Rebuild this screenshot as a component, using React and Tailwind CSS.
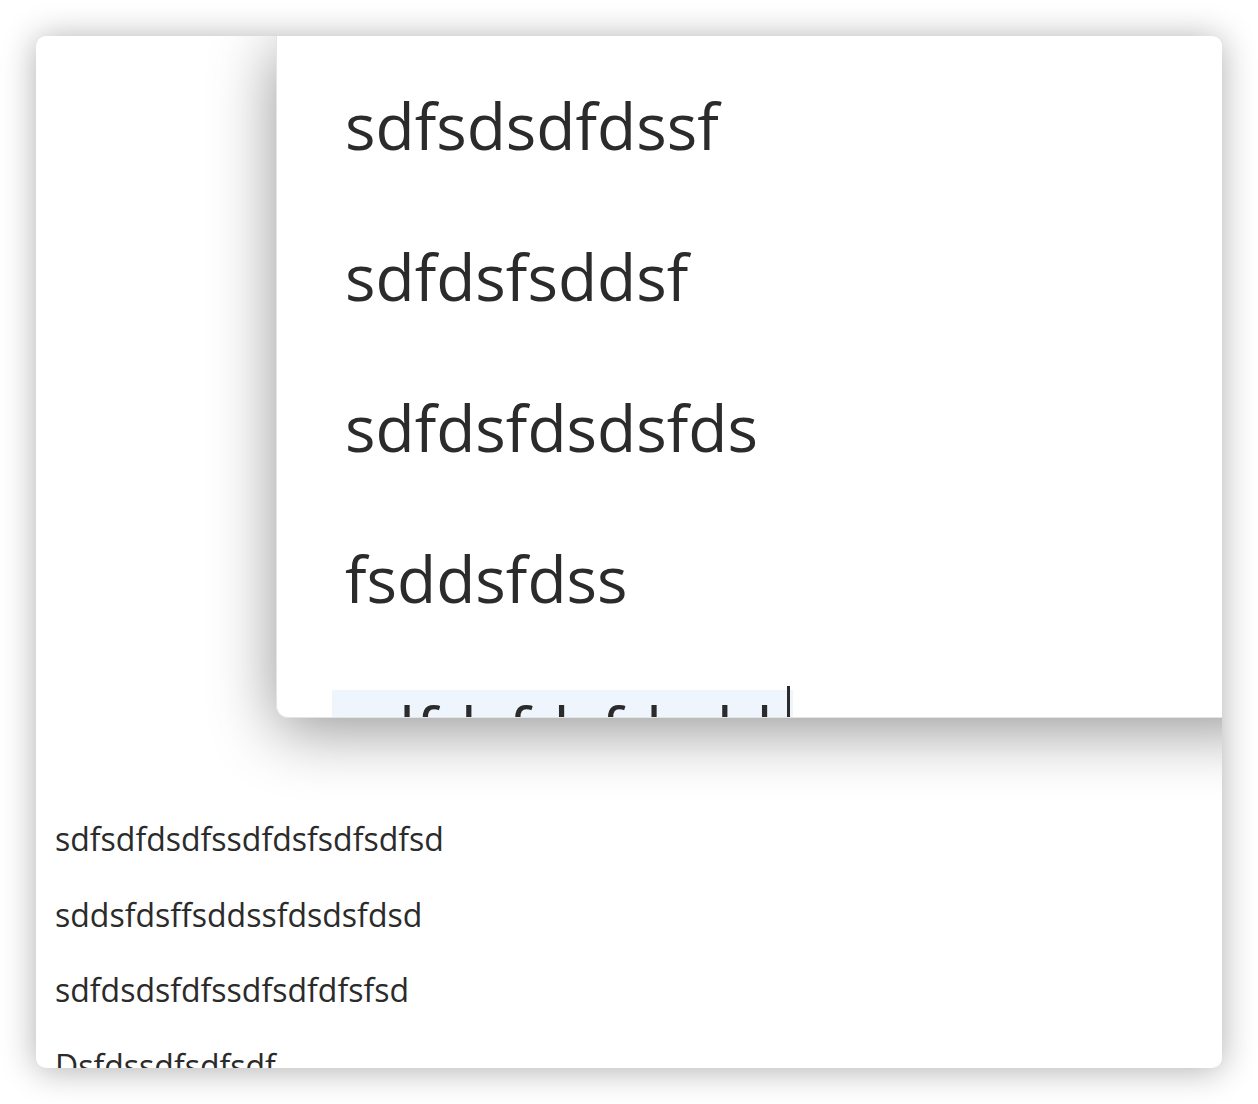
const BIG_ITEMS = ["sdfsdsdfdssf", "sdfdsfsddsf", "sdfdsfdsdsfds", "fsddsfdss"];
const HOVER_ITEM = "sdfdsfdsfdsdd";

const LIST_ITEMS = [
    "sdfsdfdsdfssdfdsfsdfsdfsd",
    "sddsfdsffsddssfdsdsfdsd",
    "sdfdsdsfdfssdfsdfdfsfsd",
    "Dsfdssdfsdfsdf",
];

export default function App() {
    return (
        <div className="min-h-screen bg-white p-[36px] font-['Open_Sans','Noto_Sans',sans-serif] text-[#2b2b2b]">
            <div className="w-[1186px] h-[1032px] rounded-[10px] overflow-hidden bg-white shadow-[0_2px_34px_rgba(0,0,0,0.32)]">
                {/* magnified dropdown */}
                <div className="relative ml-[240px] w-[1000px] h-[682px] overflow-hidden rounded-bl-[12px] bg-white border-l border-b border-[#e4e4e4] shadow-[0_12px_64px_rgba(0,0,0,0.42)] pt-[14px] pl-[68px]">
                    {BIG_ITEMS.map((t) => (
                        <div key={t} className="h-[151px] text-[64px] leading-[151px] whitespace-nowrap">
                            {t}
                        </div>
                    ))}
                    <div className="h-[151px] text-[64px] leading-[151px] whitespace-nowrap -ml-[13px]">
                        <span className="relative inline-block bg-[#eff5fc] pl-[13px] pr-[20px] leading-[80px] tracking-[0.5px]">
                            {HOVER_ITEM}
                            <span className="absolute right-[3px] -top-[4px] w-[3px] h-[90px] bg-[#2b2b2b]" />
                        </span>
                    </div>
                </div>

                {/* list underneath */}
                <div className="pt-[83px] pl-[19px]">
                    {LIST_ITEMS.map((t) => (
                        <div key={t} className="h-[75.5px] text-[32px] leading-[75.5px] whitespace-nowrap">
                            {t}
                        </div>
                    ))}
                </div>
            </div>
        </div>
    );
}
